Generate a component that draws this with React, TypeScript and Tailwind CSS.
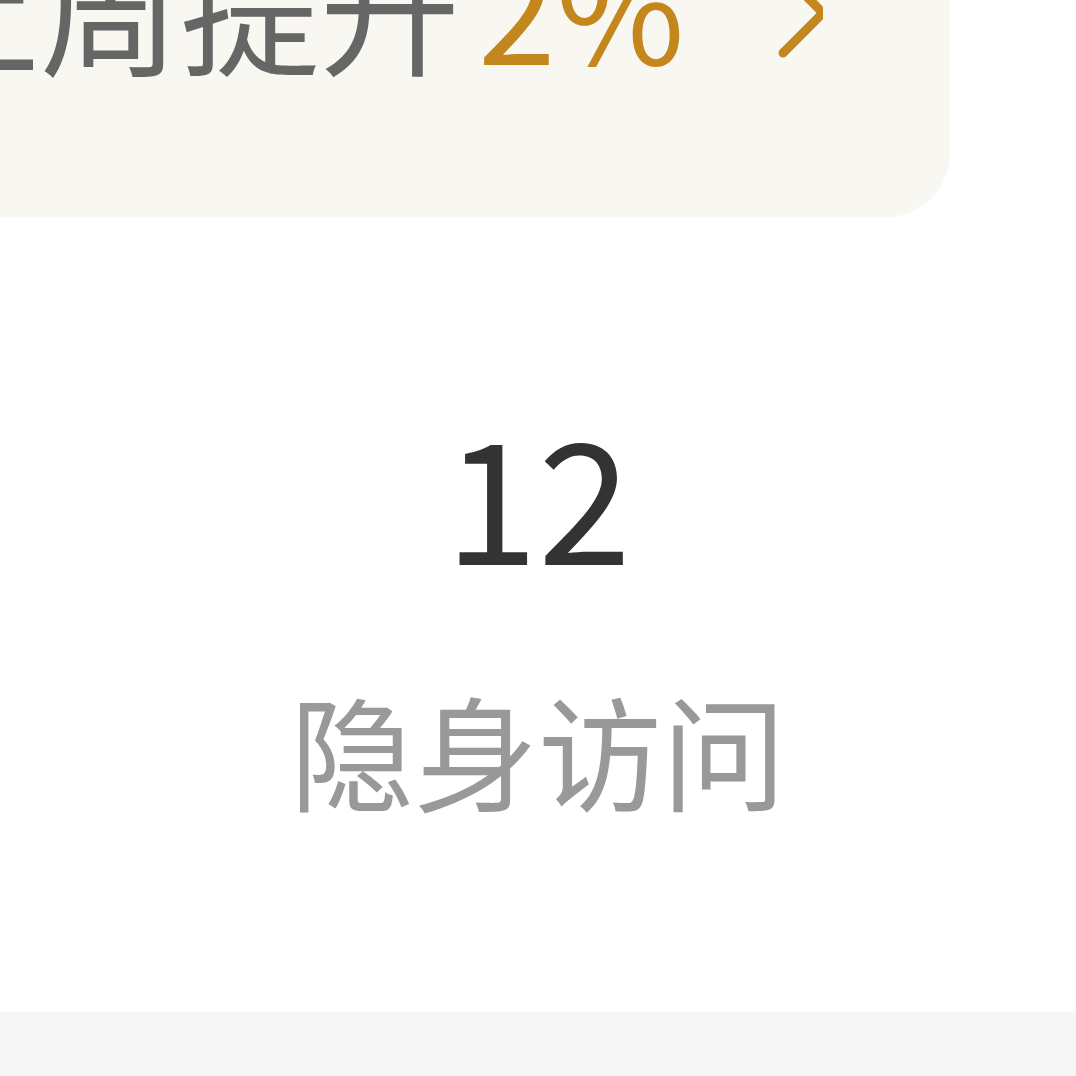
export default function App() {
  return (
    <div
      className="w-[1076px] h-[1076px] bg-white overflow-hidden flex flex-col"
      style={{ fontFamily: '"Noto Sans CJK SC", "Noto Sans", sans-serif' }}
    >
      <div className="-ml-[100px] -mt-[66px] w-[1050px] bg-[#f8f7f2] rounded-br-[64px] pb-[143px]">
        <div className="flex items-center text-[140px] leading-none">
          <span className="text-[#666666]">上周提升</span>
          <span className="ml-[18px] text-[#c4871e]">2%</span>
          <svg
            className="ml-[78px] mt-[18px]"
            width="60"
            height="100"
            viewBox="0 0 60 100"
            fill="none"
            stroke="#c4871e"
            strokeWidth={9}
            strokeLinecap="round"
            strokeLinejoin="round"
          >
            <path d="M20 10 L60 50 L20 90" />
          </svg>
        </div>
      </div>

      <div className="flex flex-col items-center pt-[191px]">
        <div className="text-[168px] leading-none text-[#333333]">12</div>
        <div className="mt-[110px] text-[124px] leading-none text-[#999999]">隐身访问</div>
      </div>

      <div className="mt-auto h-[64px] bg-[#f6f6f6]" />
    </div>
  )
}
